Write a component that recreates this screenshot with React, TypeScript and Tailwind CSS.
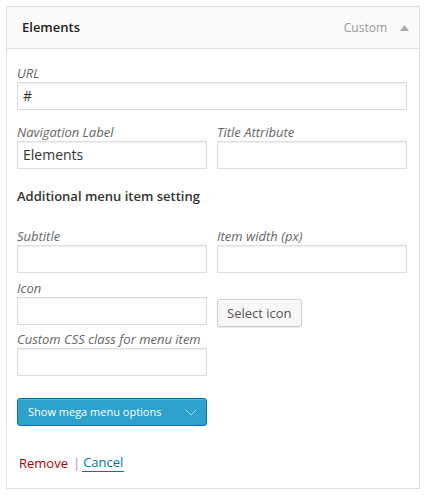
const font = { fontFamily: '"Open Sans", "Noto Sans", sans-serif' }

const Field = ({ label, value = "", wide = false }: { label: string; value?: string; wide?: boolean }) => {
    return (
        <div className={wide ? "w-[390px]" : "w-[190px]"}>
            <p className="h-[18px] text-[13px] leading-[18px] italic text-[#666]">{label}</p>
            <div className="h-[28px] border border-[#ddd] bg-white px-[5px] text-[14px] leading-[26px] text-[#333] shadow-[inset_0_1px_2px_rgba(0,0,0,0.07)]">
                {value}
            </div>
        </div>
    )
}

export default function App() {
    return (
        <div className="bg-white p-[6px]" style={font}>
            <div className="w-[414px] border border-[#e0e0e0] bg-white">
                <div className="flex h-[42px] items-center justify-between border-b border-[#e0e0e0] bg-[#fafafa] pl-[15px] pr-[10px]">
                    <span className="text-[13px] font-semibold text-[#222]">Elements</span>
                    <div className="flex items-center gap-[13px]">
                        <span className="text-[12px] text-[#999]">Custom</span>
                        <svg width="9" height="6" viewBox="0 0 9 6">
                            <path d="M4.5 0 L9 6 L0 6 Z" fill="#aaa" />
                        </svg>
                    </div>
                </div>

                <div className="px-[10px] pt-[15px] pb-[16px]">
                    <Field label="URL" value="#" wide />

                    <div className="mt-[13px] flex gap-[10px]">
                        <Field label="Navigation Label" value="Elements" />
                        <Field label="Title Attribute" />
                    </div>

                    <p className="mt-[18px] h-[18px] text-[13px] font-semibold leading-[18px] text-[#333]">
                        Additional menu item setting
                    </p>

                    <div className="mt-[22px] flex gap-[10px]">
                        <Field label="Subtitle" />
                        <Field label="Item width (px)" />
                    </div>

                    <div className="mt-[6px] flex items-end gap-[10px]">
                        <Field label="Icon" />
                        <button className="mb-[-2px] h-[28px] rounded-[3px] border border-[#ccc] bg-[#f7f7f7] px-[9px] text-[13px] leading-[26px] text-[#555] shadow-[inset_0_1px_0_#fff,0_1px_0_rgba(0,0,0,0.08)]">
                            Select icon
                        </button>
                    </div>

                    <div className="mt-[5px]">
                        <Field label="Custom CSS class for menu item" />
                    </div>

                    <button className="mt-[22px] flex h-[28px] w-[190px] items-center justify-between rounded-[3px] border border-[#0074a2] bg-[#2ea2cc] pl-[10px] pr-[9px] text-[11px] text-white shadow-[inset_0_1px_0_rgba(120,200,230,0.5)]">
                        <span>Show mega menu options</span>
                        <svg width="12" height="7" viewBox="0 0 12 7">
                            <path d="M0.5 0.5 L6 6 L11.5 0.5" fill="none" stroke="#a8dcef" strokeWidth="1" />
                        </svg>
                    </button>

                    <div className="mt-[27px] flex items-center pl-[2px] text-[13px] leading-[18px]">
                        <span className="text-[#a00]">Remove</span>
                        <span className="pl-[5px] pr-[2px] text-[#999]">|</span>
                        <span className="border-b border-[#0074a2] px-[1px] text-[#0074a2]">Cancel</span>
                    </div>
                </div>
            </div>
        </div>
    )
}
